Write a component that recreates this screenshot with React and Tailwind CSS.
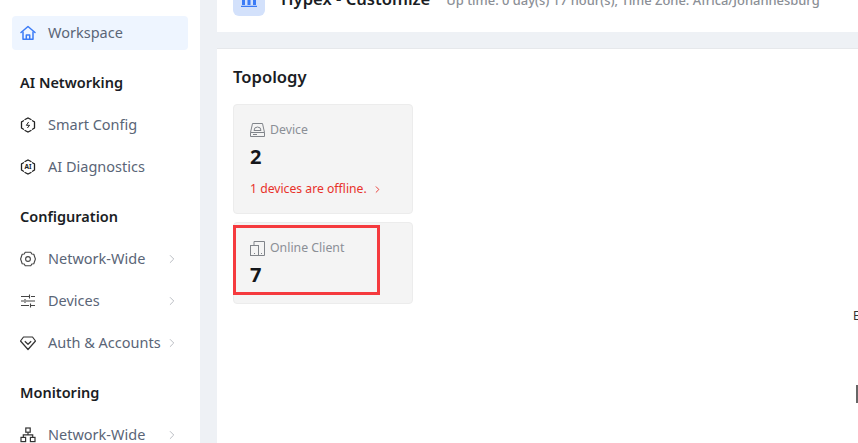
import { ChevronRight } from 'lucide-react'

const font = "[font-family:'Noto_Sans',sans-serif]"

function HomeIcon() {
    return (
        <svg width="16" height="16" viewBox="0 0 16 16" fill="none" stroke="#3b7bf6" strokeWidth="1.5" strokeLinejoin="round">
            <path d="M1 7.5 8 1.5l7 6" strokeLinecap="round" />
            <path d="M3 6.5V14.2h10V6.5" />
            <path d="M6.3 14v-4h3.4v4" />
        </svg>
    )
}

function HexIcon({ children }) {
    return (
        <svg width="16" height="16" viewBox="0 0 16 16" fill="none" stroke="#222" strokeWidth="1.3">
            <path d="M5 2.5 8 1l3 1.5M14.5 5v6M11 13.5 8 15l-3-1.5M1.5 11V5M1.5 5l2-1.2M14.5 5l-2-1.2M14.5 11l-2 1.2M1.5 11l2 1.2" strokeLinecap="round" />
            {children}
        </svg>
    )
}

function GearIcon() {
    return (
        <svg width="16" height="16" viewBox="0 0 16 16" fill="none" stroke="#444" strokeWidth="1.1" strokeLinejoin="round">
            <path d="M5.2 1.2h5.6l1 1.8 2 .3L15.4 8l-1.6 4.7-2 .3-1 1.8H5.2l-1-1.8-2-.3L.6 8l1.6-4.7 2-.3z" />
            <circle cx="8" cy="8" r="2.4" />
        </svg>
    )
}

function SlidersIcon() {
    return (
        <svg width="16" height="16" viewBox="0 0 16 16" fill="none" stroke="#444" strokeWidth="1.1">
            <path d="M1 3.5h8M11 3.5h4M1 8h3M6 8h9M1 12.5h8M11 12.5h4M9.5 1.5v4M5 6v4M10.5 10.5v4" />
        </svg>
    )
}

function ShieldIcon() {
    return (
        <svg width="16" height="16" viewBox="0 0 16 16" fill="none" stroke="#333" strokeWidth="1.2" strokeLinejoin="round">
            <path d="M3.5 2h9L15.5 6 8 14.5.5 6z" />
            <path d="M4.8 6.2 8 9.3l3.2-3.1" />
        </svg>
    )
}

function TreeIcon() {
    return (
        <svg width="16" height="16" viewBox="0 0 16 16" fill="none" stroke="#333" strokeWidth="1.2">
            <rect x="5.8" y="1" width="4.4" height="4.2" />
            <rect x="1" y="10.4" width="4.6" height="4.2" />
            <rect x="10.4" y="10.4" width="4.6" height="4.2" />
            <path d="M8 5.2v2.6M3.3 10.4V7.8h9.4v2.6" />
        </svg>
    )
}

function NavItem({ icon, label, arrow }) {
    return (
        <div className="flex h-[34px] items-center pl-2 pr-2">
            <span className="flex w-7 shrink-0 items-center">{icon}</span>
            <span className="whitespace-nowrap pb-[1px] text-[14.5px] text-[#5a6577]">{label}</span>
            {arrow && <ChevronRight size={14} strokeWidth={1.5} className="ml-auto mr-[1px] shrink-0 text-[#b0b4ba]" />}
        </div>
    )
}

function Heading({ children }) {
    return <div className="mt-[24px] mb-[16px] flex h-[18px] items-center pb-[1px] pl-2 text-[14.5px] font-semibold text-[#1a1d24]">{children}</div>
}

function StatCard({ icon, label, value, children, height }) {
    return (
        <div className={`w-[180px] rounded border border-[#ececec] bg-[#f4f4f4] px-4 pt-[16px] ${height}`}>
            <div className="flex h-[18px] items-center gap-[5px] text-[12.3px] text-[#8b8f96]">
                {icon}
                {label}
            </div>
            <div className="mt-[4px] text-[20px] leading-[28px] font-bold text-[#14161a]">{value}</div>
            {children}
        </div>
    )
}

export default function App() {
    return (
        <div className={`relative flex h-[443px] w-[858px] overflow-hidden bg-[#eef1f5] ${font}`}>
            <aside className="w-[200px] shrink-0 overflow-hidden bg-white px-3 pt-4">
                <div className="flex h-[34px] items-center rounded bg-[#eef5ff] pl-2">
                    <span className="flex w-7 items-center"><HomeIcon /></span>
                    <span className="pb-[1px] text-[14.5px] text-[#5a6577]">Workspace</span>
                </div>
                <Heading>AI Networking</Heading>
                <div className="flex flex-col gap-2">
                    <NavItem label="Smart Config" icon={<HexIcon><path d="M8.6 5 6.4 8.3h3.2L7.4 11" strokeWidth="1" /></HexIcon>} />
                    <NavItem label="AI Diagnostics" icon={<HexIcon><text x="8" y="10.4" textAnchor="middle" fontSize="6.5" fontWeight="700" fill="#222" stroke="none">AI</text></HexIcon>} />
                </div>
                <Heading>Configuration</Heading>
                <div className="flex flex-col gap-2">
                    <NavItem label="Network-Wide" arrow icon={<GearIcon />} />
                    <NavItem label="Devices" arrow icon={<SlidersIcon />} />
                    <NavItem label="Auth & Accounts" arrow icon={<ShieldIcon />} />
                </div>
                <Heading>Monitoring</Heading>
                <NavItem label="Network-Wide" arrow icon={<TreeIcon />} />
            </aside>

            <div className="ml-[17px] flex min-w-0 flex-1 flex-col">
                <header className="flex h-[32px] shrink-0 items-start gap-4 overflow-hidden bg-white pl-4">
                    <div className="h-[16px] w-[32px] shrink-0 rounded-b-md bg-[#d3e1fb]">
                        <svg width="32" height="16" viewBox="0 0 32 16" fill="#3b7bf6">
                            <path d="M9 0h3v5H9zM14.5 0h3v5h-3zM20 0h3v5h-3zM8 5.8h16V7H8z" />
                        </svg>
                    </div>
                    <span className="-mt-[13px] whitespace-nowrap text-[16.6px] leading-[24px] font-semibold text-[#1a1d24]">Hypex - Customize</span>
                    <span className="-mt-[10px] whitespace-nowrap text-[12.9px] leading-[20px] font-medium text-[#8b8f96]">Up time: 0 day(s) 17 hour(s), Time Zone: Africa/Johannesburg</span>
                </header>

                <main className="mt-[16px] min-h-0 flex-1 border-t border-[#e6e8eb] bg-white pl-4 pt-[16px]">
                    <h2 className="text-[16.6px] leading-[24px] font-semibold text-[#1a1d24]">Topology</h2>
                    <div className="mt-[15px] flex flex-col gap-2">
                        <StatCard
                            height="h-[110px]"
                            label="Device"
                            value="2"
                            icon={
                                <svg width="15" height="14" viewBox="0 0 15 14" fill="none" stroke="#80848a" strokeWidth="1">
                                    <path d="M2.5.5h10l2 9v4H.5v-4z" />
                                    <path d="M.5 9.5h14M3 11.5h4M4 7.5a3.5 3.5 0 0 1 7 0z" />
                                </svg>
                            }
                        >
                            <div className="mt-[9px] flex items-center gap-[5px] text-[12.2px] text-[#e8312a]">
                                1 devices are offline.
                                <ChevronRight size={11} strokeWidth={2} />
                            </div>
                        </StatCard>
                        <StatCard
                            height="h-[82px]"
                            label="Online Client"
                            value="7"
                            icon={
                                <svg width="15" height="15" viewBox="0 0 15 15" fill="none" stroke="#80848a" strokeWidth="1">
                                    <rect x="0.5" y="4.5" width="8" height="10" />
                                    <path d="M4 4.5V.5h10.5v14H8.5M4 12.5h1M11 12.5h1" />
                                </svg>
                            }
                        />
                    </div>
                </main>
            </div>

            <div className="absolute left-[233px] top-[225px] h-[70px] w-[147px] border-[3px] border-[#f53a3e]" />
            <span className="absolute left-[853px] top-[308px] text-[12px] leading-[16px] text-[#333]">E</span>
            <div className="absolute left-[856px] top-[385px] h-[18px] w-[2px] bg-[#666]" />
        </div>
    )
}
